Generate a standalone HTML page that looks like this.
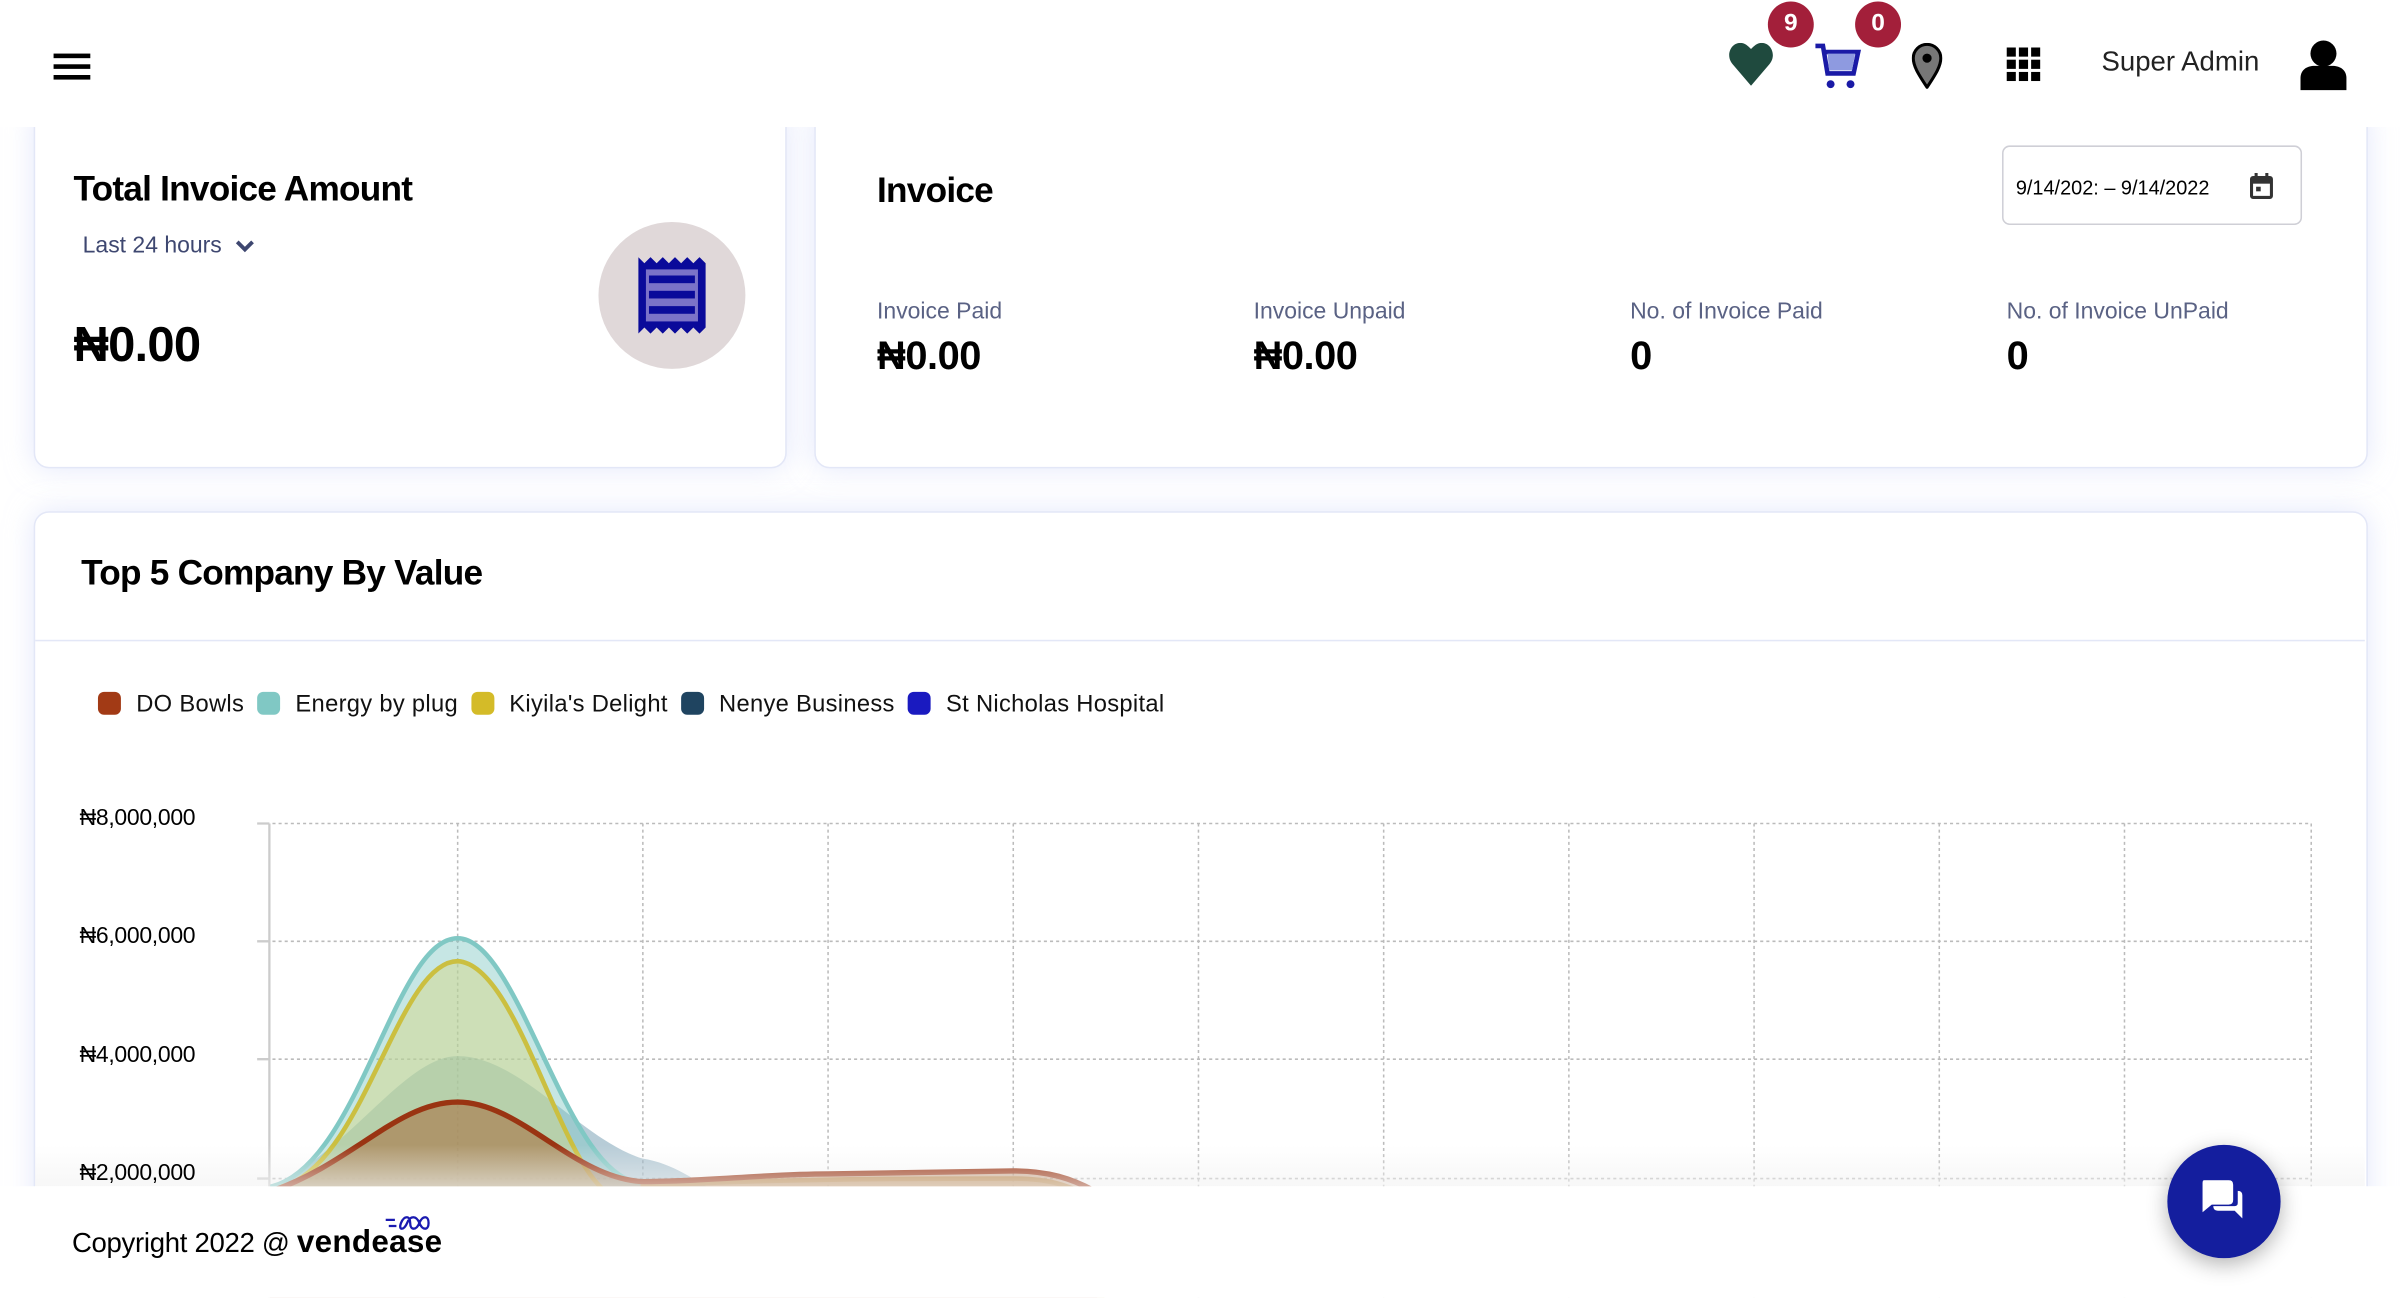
<!DOCTYPE html>
<html><head><meta charset="utf-8"><style>
html,body{margin:0;padding:0;background:#fff;overflow:hidden;width:2400px;height:1298px}
#s{position:absolute;left:0;top:0;width:1568px;height:848px;overflow:hidden;transform:scale(1.530612);transform-origin:0 0;font-family:"Liberation Sans",sans-serif;color:#000;background:#fff}
.card{position:absolute;background:#fff;border:1px solid #e3e7f7;border-radius:10px;box-shadow:0 0 18px rgba(205,214,248,.55)}
.t{position:absolute;white-space:nowrap}
</style></head><body><div id="s">

<div class="card" style="left:22px;top:70px;width:490px;height:234px"></div>
<div class="card" style="left:532px;top:70px;width:1013px;height:234px"></div>
<div class="card" style="left:22px;top:334px;width:1523px;height:480px"></div>
<div style="position:absolute;left:23px;top:418px;width:1522px;height:1px;background:#e3e7f7"></div>

<!-- header -->
<div style="position:absolute;left:0;top:0;width:1568px;height:83px;background:#fff"></div>
<div style="position:absolute;left:35px;top:35px;width:24px;height:3px;background:#000;box-shadow:0 7px 0 #000,0 14px 0 #000"></div>
<svg style="position:absolute;left:1129px;top:28px" width="30" height="28" viewBox="0 0 30 28"><path d="M15 28 L3 14 C-2 8 2 0 8 0 C11 0 13 2 15 4 C17 2 19 0 22 0 C28 0 32 8 27 14 Z" fill="#1f4a3e"/></svg>
<svg style="position:absolute;left:1186px;top:28px" width="30" height="32" viewBox="0 0 30 32"><path d="M0 2 H5 L8 20 H25 L28 6 H7" fill="none" stroke="#1a1aa6" stroke-width="3"/><path d="M8 7 H26 L24 18 H9 Z" fill="#8e9ae0"/><circle cx="10" cy="27" r="2.6" fill="#1a1aa6"/><circle cx="23" cy="27" r="2.6" fill="#1a1aa6"/></svg>
<svg style="position:absolute;left:1249px;top:28px" width="20" height="30" viewBox="0 0 20 30"><path d="M10 29 C4 20 1 15 1 10 A9 9 0 0 1 19 10 C19 15 16 20 10 29Z" fill="#777" stroke="#000" stroke-width="2"/><circle cx="10" cy="10" r="3" fill="#000"/></svg>
<svg style="position:absolute;left:1311px;top:31px" width="22" height="22" viewBox="0 0 22 22" fill="#000"><rect x="0" y="0" width="6" height="6"/><rect x="8" y="0" width="6" height="6"/><rect x="16" y="0" width="6" height="6"/><rect x="0" y="8" width="6" height="6"/><rect x="8" y="8" width="6" height="6"/><rect x="16" y="8" width="6" height="6"/><rect x="0" y="16" width="6" height="6"/><rect x="8" y="16" width="6" height="6"/><rect x="16" y="16" width="6" height="6"/></svg>
<div style="position:absolute;left:1155px;top:1px;width:30px;height:30px;border-radius:50%;background:#a31f3a;color:#fff;font-weight:bold;font-size:16px;text-align:center;line-height:30px">9</div>
<div style="position:absolute;left:1212px;top:1px;width:30px;height:30px;border-radius:50%;background:#a31f3a;color:#fff;font-weight:bold;font-size:16px;text-align:center;line-height:30px">0</div>
<div class="t" style="left:1373px;top:30px;font-size:18px;color:#222">Super Admin</div>
<svg style="position:absolute;left:1502px;top:25px" width="32" height="34" viewBox="0 0 32 34"><circle cx="16" cy="10" r="8.5" fill="#000"/><path d="M1 34 V26 C1 20 6 18 10 18 H22 C26 18 31 20 31 26 V34 Z" fill="#000"/></svg>

<!-- card 1 -->
<div class="t" style="left:48px;top:110px;font-size:23px;font-weight:bold;letter-spacing:-0.5px">Total Invoice Amount</div>
<div class="t" style="left:54px;top:152px;font-size:15px;color:#3e4770">Last 24 hours</div>
<svg style="position:absolute;left:153px;top:156px" width="14" height="10" viewBox="0 0 14 10"><path d="M2 2 L7 7 L12 2" fill="none" stroke="#3e4770" stroke-width="2.5"/></svg>
<div class="t" style="left:48px;top:207px;font-size:32px;font-weight:bold;letter-spacing:-0.5px">₦0.00</div>
<div style="position:absolute;left:391px;top:145px;width:96px;height:96px;border-radius:50%;background:#e0d8d9"></div>
<svg style="position:absolute;left:417px;top:168px" width="45" height="50" viewBox="0 0 45 50"><path d="M0 0 L4 4 L8 0 L12 4 L16 0 L20 4 L24 0 L28 4 L32 0 L36 4 L40 0 L44 4 V46 L40 50 L36 46 L32 50 L28 46 L24 50 L20 46 L16 50 L12 46 L8 50 L4 46 L0 50 Z" fill="#0a0a9a"/><rect x="5" y="8" width="34" height="34" fill="#7b72c8"/><rect x="7" y="12" width="30" height="5" fill="#0a0a9a"/><rect x="7" y="22" width="30" height="5" fill="#0a0a9a"/><rect x="7" y="32" width="30" height="5" fill="#0a0a9a"/></svg>

<!-- card 2 -->
<div class="t" style="left:573px;top:111px;font-size:23px;font-weight:bold;letter-spacing:-0.5px">Invoice</div>
<div style="position:absolute;left:1308px;top:95px;width:194px;height:50px;border:1px solid #cfcfd6;border-radius:5px"></div>
<div class="t" style="left:1317px;top:115px;font-size:13px">9/14/202: – 9/14/2022</div>
<svg style="position:absolute;left:1470px;top:113px" width="15" height="17" viewBox="0 0 15 17"><rect x="1" y="3" width="13" height="13" rx="1" fill="none" stroke="#333" stroke-width="2"/><rect x="1" y="3" width="13" height="4" fill="#333"/><rect x="3" y="0" width="2" height="4" fill="#333"/><rect x="10" y="0" width="2" height="4" fill="#333"/><rect x="4" y="9" width="3" height="3" fill="#333"/></svg>
<div class="t" style="left:573px;top:195px;font-size:15px;color:#5a6284">Invoice Paid</div>
<div class="t" style="left:819px;top:195px;font-size:15px;color:#5a6284">Invoice Unpaid</div>
<div class="t" style="left:1065px;top:195px;font-size:15px;color:#5a6284">No. of Invoice Paid</div>
<div class="t" style="left:1311px;top:195px;font-size:15px;color:#5a6284">No. of Invoice UnPaid</div>
<div class="t" style="left:573px;top:217px;font-size:26px;font-weight:bold;letter-spacing:-0.3px">₦0.00</div>
<div class="t" style="left:819px;top:217px;font-size:26px;font-weight:bold;letter-spacing:-0.3px">₦0.00</div>
<div class="t" style="left:1065px;top:217px;font-size:26px;font-weight:bold">0</div>
<div class="t" style="left:1311px;top:217px;font-size:26px;font-weight:bold">0</div>

<!-- card 3 -->
<div class="t" style="left:53px;top:361px;font-size:23px;font-weight:bold;letter-spacing:-0.5px">Top 5 Company By Value</div>
<div style="position:absolute;left:64px;top:452px;font-size:15.5px;letter-spacing:0.2px;color:#111;white-space:nowrap;line-height:16px">
<span style="display:inline-block;width:15px;height:15px;border-radius:4px;background:#a23a15;vertical-align:-2px;margin-right:10px"></span>DO Bowls
<span style="display:inline-block;width:15px;height:15px;border-radius:4px;background:#80c8c4;vertical-align:-2px;margin:0 10px 0 4px"></span>Energy by plug
<span style="display:inline-block;width:15px;height:15px;border-radius:4px;background:#d4bb28;vertical-align:-2px;margin:0 10px 0 4px"></span>Kiyila's Delight
<span style="display:inline-block;width:15px;height:15px;border-radius:4px;background:#1f4460;vertical-align:-2px;margin:0 10px 0 4px"></span>Nenye Business
<span style="display:inline-block;width:15px;height:15px;border-radius:4px;background:#1a1ac0;vertical-align:-2px;margin:0 10px 0 4px"></span>St Nicholas Hospital
</div>
<svg style="position:absolute;left:0;top:0" width="1568" height="848">
<defs><linearGradient id="g" x1="0" y1="0" x2="0" y2="1"><stop offset="0" stop-color="#f2f2f2" stop-opacity="0"/><stop offset="1" stop-color="#f2f2f2" stop-opacity=".6"/></linearGradient></defs>
<g stroke="#bbb" stroke-width="1" stroke-dasharray="2,2" fill="none">
<path d="M178 538H1510M178 615H1510M178 692H1510M178 770H1510"/>
<path d="M299 538V848M420 538V848M541 538V848M662 538V848M783 538V848M904 538V848M1025 538V848M1146 538V848M1267 538V848M1388 538V848M1510 538V848"/>
</g>
<path d="M176 538V848" stroke="#ccc" stroke-width="1.5"/>
<path d="M168 538H176M168 615H176M168 692H176M168 770H176" stroke="#ccc" stroke-width="1.5"/>
<path d="M178 775 C230 750 265 690 299 690 C340 690 380 745 420 757 C440 760 455 772 470 780 L470 848 L178 848Z" fill="#6f9ab0" fill-opacity=".5"/>
<path d="M178 775 C235 760 258 613 299 613 C340 613 370 772 420 773 L420 848 L178 848Z" fill="#80c8c4" fill-opacity=".45" stroke="#80c8c4" stroke-width="3"/>
<path d="M185 775 C238 760 260 628 299 628 C338 630 365 760 398 780 L398 848 L185 848Z" fill="#d4d880" fill-opacity=".45" stroke="#cbbf40" stroke-width="3"/>
<path d="M420 775 C500 770 600 770 662 770 C690 770 700 776 720 785 L720 848 L420 848Z" fill="#c9a050" fill-opacity=".6" stroke="#c9a050" stroke-width="3"/>
<path d="M178 778 C230 760 260 720 299 720 C340 720 375 770 420 772 C460 772 500 767 541 767 C600 766 640 765 662 765 C685 765 700 770 715 778 L715 848 L178 848Z" fill="#a86a3a" fill-opacity=".55" stroke="#9a3412" stroke-width="3.5"/>
<rect x="23" y="748" width="1522" height="27" fill="url(#g)"/>
</svg>
<div class="t" style="left:52px;top:526px;font-size:15px;letter-spacing:-0.2px">₦8,000,000</div>
<div class="t" style="left:52px;top:603px;font-size:15px;letter-spacing:-0.2px">₦6,000,000</div>
<div class="t" style="left:52px;top:681px;font-size:15px;letter-spacing:-0.2px">₦4,000,000</div>
<div class="t" style="left:52px;top:758px;font-size:15px;letter-spacing:-0.2px">₦2,000,000</div>

<!-- footer -->
<div style="position:absolute;left:0;top:775px;width:1568px;height:73px;background:#fff"></div>
<div class="t" style="left:47px;top:800px;font-size:18px;letter-spacing:-0.2px">Copyright 2022 @ <span style="font-weight:bold;font-size:20.5px;letter-spacing:0.2px">vendease</span></div>
<svg style="position:absolute;left:250px;top:792px" width="32" height="14" viewBox="0 0 32 14"><path d="M2 5 H8 M4 9 H9 M12 7 C14 2 18 2 18 7 C18 12 22 12 24 7 C26 2 30 2 30 7 C30 12 26 12 24 7 C22 2 18 2 16 7 C14 12 10 12 12 7" fill="none" stroke="#1a1ab0" stroke-width="1.5"/></svg>

<div style="position:absolute;left:1416px;top:748px;width:74px;height:74px;border-radius:50%;background:#141e9e;box-shadow:0 4px 14px rgba(0,0,0,.3)"></div>
<svg style="position:absolute;left:1438px;top:771px" width="32" height="28" viewBox="0 0 32 28"><path d="M2 0 H18 Q21 0 21 3 V13 Q21 16 18 16 H7 L1 21 V2 Q1 0 2 0Z" fill="#fff"/><path d="M24 7 Q27 7 27 10 V25 L22 20 H11 Q8 20 8 17 H22 Q24 17 24 15Z" fill="#fff"/></svg>
</div></body></html>
